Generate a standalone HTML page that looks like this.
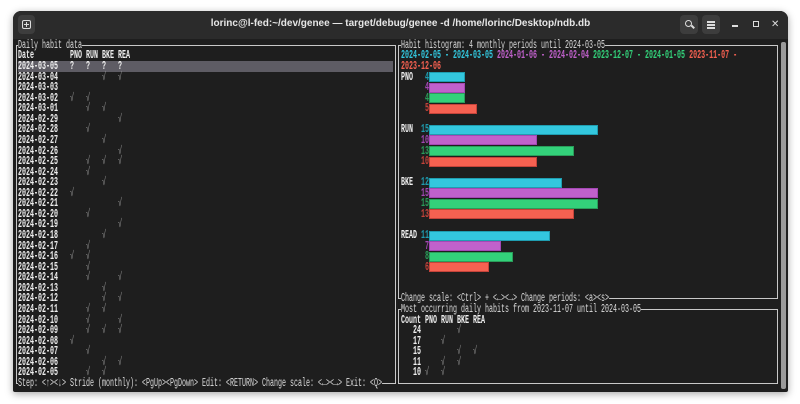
<!DOCTYPE html>
<html><head><meta charset="utf-8"><style>
*{margin:0;padding:0;box-sizing:border-box}
body{width:800px;height:404px;background:#fff;position:relative;overflow:hidden;font-family:"Liberation Sans",sans-serif}
.win{position:absolute;left:13px;top:11px;width:775px;height:381px;background:#1e1e1e;border-radius:8px 8px 2px 2px;box-shadow:0 2px 8px rgba(0,0,0,.35);overflow:hidden}
.tb{position:absolute;left:0;top:0;width:775px;height:28px;background:#2b2b2b}
.btn{position:absolute;top:4px;width:18px;height:19px;background:#3d3d3d;border-radius:4px}
.title{position:absolute;left:0;width:775px;top:7px;text-align:center;color:#e6e6e6;font-size:10px;font-weight:bold}
pre{position:absolute;font-family:"Liberation Mono",monospace;font-size:11.5px;line-height:10.566px;color:#dcdcdc;transform:scaleX(0.5797);transform-origin:0 0;white-space:pre}
.b{font-weight:bold;color:#f0f0f0}
.c{color:#9a9a9a;font-weight:normal}
.bx{position:absolute;border:1px solid #c8c8c8}
.bg{background:#1e1e1e}
.bar{position:absolute;left:429px;height:10px}
.cy{color:#33c7de}.pu{color:#c061cb}.gr{color:#33d17a}.rd{color:#f66151}
.cy2{color:#1f9db0}.pu2{color:#a447b5}.gr2{color:#2a9d5a}.rd2{color:#c4433a}
</style></head><body>
<div class="win">
 <div class="tb">
  <div class="btn" style="left:5px;width:17px"><div style="position:absolute;left:4px;top:5px;width:9px;height:9px;border:1.5px solid #ddd;border-radius:2px"></div><div style="position:absolute;left:6px;top:8.5px;width:5px;height:1.5px;background:#ddd"></div><div style="position:absolute;left:7.8px;top:6.5px;width:1.5px;height:5px;background:#ddd"></div></div>
  <div class="title">lorinc@l-fed:~/dev/genee — target/debug/genee -d /home/lorinc/Desktop/ndb.db</div>
  <div class="btn" style="left:667px"><div style="position:absolute;left:5px;top:5px;width:7px;height:7px;border:1.5px solid #ddd;border-radius:50%"></div><div style="position:absolute;left:11px;top:11px;width:4px;height:1.5px;background:#ddd;transform:rotate(45deg)"></div></div>
  <div class="btn" style="left:689px"><div style="position:absolute;left:5px;top:6px;width:8px;height:1.5px;background:#ddd;box-shadow:0 3px 0 #ddd,0 6px 0 #ddd"></div></div>
  <div style="position:absolute;left:719px;top:14px;width:6px;height:1.5px;background:#ddd"></div>
  <div style="position:absolute;left:740px;top:10px;width:6px;height:6px;border:1.5px solid #ddd"></div>
  <div style="position:absolute;left:758px;top:8px;color:#ddd;font-size:10px">✕</div>
 </div>
 <div style="position:absolute;left:768px;top:31px;width:5px;height:347px;background:#9a9a9a;border-radius:2px"></div>
</div>

<div class="bx" style="left:16px;top:45px;width:380px;height:339px"></div>
<div class="bx" style="left:398px;top:45px;width:380px;height:254px"></div>
<div class="bx" style="left:398px;top:309px;width:380px;height:75px"></div>
<div style="position:absolute;left:18px;top:61px;width:375px;height:10.6px;background:#5e5c64"></div>

<div class="bar" style="top:72px;width:36px;background:#33c7de;border:1px solid #1f9db0"></div>
<div class="bar" style="top:82.6px;width:36px;background:#c061cb;border:1px solid #a447b5"></div>
<div class="bar" style="top:93.2px;width:36px;background:#33d17a;border:1px solid #2a9d5a"></div>
<div class="bar" style="top:103.7px;width:48px;background:#f66151;border:1px solid #c4433a"></div>
<div class="bar" style="top:124.8px;width:169px;background:#33c7de;border:1px solid #1f9db0"></div>
<div class="bar" style="top:135.4px;width:108px;background:#c061cb;border:1px solid #a447b5"></div>
<div class="bar" style="top:146px;width:145px;background:#33d17a;border:1px solid #2a9d5a"></div>
<div class="bar" style="top:156.5px;width:108px;background:#f66151;border:1px solid #c4433a"></div>
<div class="bar" style="top:177.7px;width:133px;background:#33c7de;border:1px solid #1f9db0"></div>
<div class="bar" style="top:188.2px;width:169px;background:#c061cb;border:1px solid #a447b5"></div>
<div class="bar" style="top:198.8px;width:169px;background:#33d17a;border:1px solid #2a9d5a"></div>
<div class="bar" style="top:209.4px;width:145px;background:#f66151;border:1px solid #c4433a"></div>
<div class="bar" style="top:230.5px;width:121px;background:#33c7de;border:1px solid #1f9db0"></div>
<div class="bar" style="top:241.1px;width:72px;background:#c061cb;border:1px solid #a447b5"></div>
<div class="bar" style="top:251.7px;width:84px;background:#33d17a;border:1px solid #2a9d5a"></div>
<div class="bar" style="top:262.2px;width:60px;background:#f66151;border:1px solid #c4433a"></div>

<pre style="left:18px;top:40.9px"><span class="bg">Daily habit data</span>
<span class="b">Date         PNO RUN BKE REA</span>
<span class="b">2024-03-05   ?   ?   ?   ?</span>
<span class="b">2024-03-04</span><span class="c">           √   √</span>
<span class="b">2024-03-03</span>
<span class="b">2024-03-02</span><span class="c">   √   √</span>
<span class="b">2024-03-01</span><span class="c">       √   √</span>
<span class="b">2024-02-29</span><span class="c">               √</span>
<span class="b">2024-02-28</span><span class="c">       √</span>
<span class="b">2024-02-27</span><span class="c">           √</span>
<span class="b">2024-02-26</span><span class="c">               √</span>
<span class="b">2024-02-25</span><span class="c">       √   √   √</span>
<span class="b">2024-02-24</span><span class="c">       √</span>
<span class="b">2024-02-23</span><span class="c">           √</span>
<span class="b">2024-02-22</span><span class="c">   √</span>
<span class="b">2024-02-21</span><span class="c">               √</span>
<span class="b">2024-02-20</span><span class="c">       √</span>
<span class="b">2024-02-19</span><span class="c">               √</span>
<span class="b">2024-02-18</span><span class="c">           √</span>
<span class="b">2024-02-17</span><span class="c">       √</span>
<span class="b">2024-02-16</span><span class="c">   √   √</span>
<span class="b">2024-02-15</span><span class="c">       √</span>
<span class="b">2024-02-14</span><span class="c">       √       √</span>
<span class="b">2024-02-13</span><span class="c">           √</span>
<span class="b">2024-02-12</span><span class="c">           √   √</span>
<span class="b">2024-02-11</span><span class="c">       √   √</span>
<span class="b">2024-02-10</span><span class="c">       √       √</span>
<span class="b">2024-02-09</span><span class="c">       √   √   √</span>
<span class="b">2024-02-08</span><span class="c">   √</span>
<span class="b">2024-02-07</span><span class="c">       √</span>
<span class="b">2024-02-06</span><span class="c">           √   √</span>
<span class="b">2024-02-05</span><span class="c">       √   √</span>
<span class="bg">Step: &lt;↑&gt;&lt;↓&gt; Stride (monthly): &lt;PgUp&gt;&lt;PgDown&gt; Edit: &lt;RETURN&gt; Change scale: &lt;←&gt;&lt;→&gt; Exit: &lt;Q&gt;</span></pre>

<pre style="left:401px;top:40.9px"><span class="bg">Habit histogram: 4 monthly periods until 2024-03-05</span>
<span class="b"><span class="cy">2024-02-05 - 2024-03-05 </span><span class="pu">2024-01-06 - 2024-02-04 </span><span class="gr">2023-12-07 - 2024-01-05 </span><span class="rd">2023-11-07 -</span></span>
<span class="b rd">2023-12-06</span>
<span class="b">PNO   <span class="cy2">4</span></span>
<span class="b pu2">      4</span>
<span class="b gr2">      4</span>
<span class="b rd2">      5</span>

<span class="b">RUN  <span class="cy2">15</span></span>
<span class="b pu2">     10</span>
<span class="b gr2">     13</span>
<span class="b rd2">     10</span>

<span class="b">BKE  <span class="cy2">12</span></span>
<span class="b pu2">     15</span>
<span class="b gr2">     15</span>
<span class="b rd2">     13</span>

<span class="b">READ <span class="cy2">11</span></span>
<span class="b pu2">      7</span>
<span class="b gr2">      8</span>
<span class="b rd2">      6</span>


<span class="bg">Change scale: &lt;Ctrl&gt; + &lt;←&gt;&lt;→&gt; Change periods: &lt;a&gt;&lt;s&gt;</span>
<span class="bg">Most occurring daily habits from 2023-11-07 until 2024-03-05</span>
<span class="b">Count PNO RUN BKE REA</span>
<span class="b">   24</span><span class="c">         √</span>
<span class="b">   17</span><span class="c">     √</span>
<span class="b">   15</span><span class="c">         √   √</span>
<span class="b">   11</span><span class="c">     √   √</span>
<span class="b">   10</span><span class="c"> √   √</span></pre>
</body></html>
